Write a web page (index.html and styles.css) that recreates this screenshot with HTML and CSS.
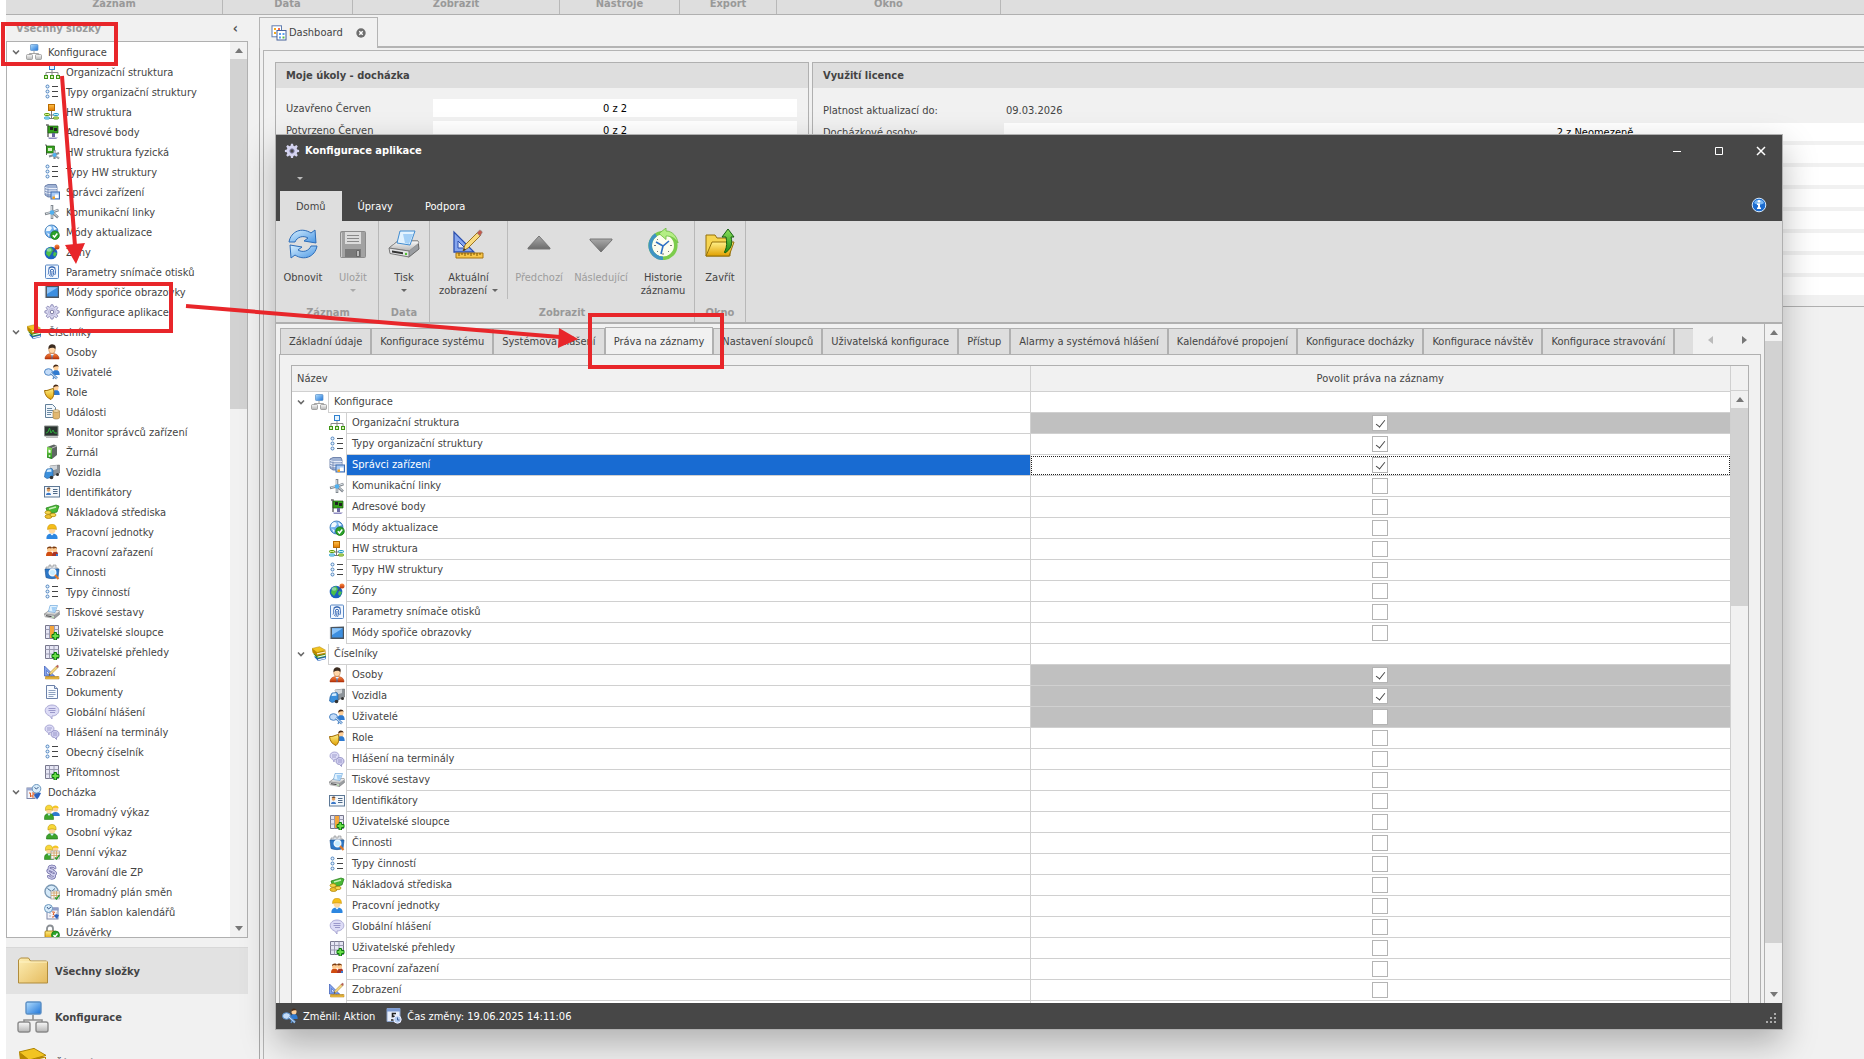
FILE: index.html
```html
<!DOCTYPE html>
<html lang="cs">
<head>
    <meta charset="utf-8">
    <title>Konfigurace aplikace</title>
    <link rel="stylesheet" href="styles.css">
</head>
<body>

<!-- icon sprite -->
<svg class="sprite" aria-hidden="true">
    <defs>
        <linearGradient id="blue" x1="0" y1="0" x2="1" y2="1"><stop offset="0" stop-color="#b5e0ff"/><stop offset="1" stop-color="#1e74d8"/></linearGradient>
        <linearGradient id="sky" x1="0" y1="0" x2="1" y2="1"><stop offset="0" stop-color="#d8f0ff"/><stop offset="1" stop-color="#4a96e4"/></linearGradient>
        <linearGradient id="gold" x1="0" y1="0" x2="0" y2="1"><stop offset="0" stop-color="#fff08a"/><stop offset="1" stop-color="#e0a000"/></linearGradient>
        <linearGradient id="green" x1="0" y1="0" x2="0" y2="1"><stop offset="0" stop-color="#8be05a"/><stop offset="1" stop-color="#1d8a16"/></linearGradient>
        <linearGradient id="orange" x1="0" y1="0" x2="0" y2="1"><stop offset="0" stop-color="#ffc24a"/><stop offset="1" stop-color="#e07800"/></linearGradient>
        <linearGradient id="red" x1="0" y1="0" x2="0" y2="1"><stop offset="0" stop-color="#ff8a40"/><stop offset="1" stop-color="#b83208"/></linearGradient>
        <linearGradient id="silver" x1="0" y1="0" x2="0" y2="1"><stop offset="0" stop-color="#fafafa"/><stop offset="1" stop-color="#b4b4b4"/></linearGradient>
        <linearGradient id="steel" x1="0" y1="0" x2="0" y2="1"><stop offset="0" stop-color="#a8a8a8"/><stop offset="1" stop-color="#6c6c6c"/></linearGradient>
        <linearGradient id="folder" x1="0" y1="0" x2="1" y2="1"><stop offset="0" stop-color="#fdeeb4"/><stop offset="1" stop-color="#e5bb5e"/></linearGradient>
    </defs>

    <symbol id="i-net" viewBox="0 0 16 16">
        <path d="M8 7v2.500M3.500 11V9.500h9V11" fill="none" stroke="#8f8f8f" stroke-width=".8"/>
        <rect x="4.500" y=".5" width="7.500" height="6" rx=".8" fill="url(#blue)" stroke="#5a8ec4" stroke-width=".7"/>
        <rect x=".5" y="10.500" width="6" height="5" rx="1" fill="url(#silver)" stroke="#8a8a8a" stroke-width=".7"/>
        <rect x="9.500" y="10.500" width="6" height="5" rx="1" fill="url(#silver)" stroke="#8a8a8a" stroke-width=".7"/>
    </symbol>
    <symbol id="i-org" viewBox="0 0 16 16">
        <path d="M8 6v6M2 12V8.500h12V12" fill="none" stroke="#8a8a8a"/>
        <rect x="5.500" y=".5" width="5" height="5" fill="#e4f3ff" stroke="#2f80cf"/>
        <g fill="#d8f5b8" stroke="#3f9416"><rect x=".5" y="11.500" width="3" height="3"/><rect x="6.500" y="11.500" width="3" height="3"/><rect x="12.500" y="11.500" width="3" height="3"/></g>
    </symbol>
    <symbol id="i-list" viewBox="0 0 16 16">
        <g fill="#eaf4fd" stroke="#4d83c0"><circle cx="3.500" cy="2.500" r="1.500"/><circle cx="3.500" cy="7.500" r="1.500"/><circle cx="3.500" cy="12.500" r="1.500"/></g>
        <path d="M8 2.500h6M8 7.500h6M8 12.500h6" stroke="#444"/>
    </symbol>
    <symbol id="i-hw" viewBox="0 0 16 16">
        <path d="M7.500 7v8M5 11h6M5 14.500h6" stroke="#777" fill="none"/>
        <rect x="4.500" y=".5" width="6" height="6" fill="url(#orange)" stroke="#b86a00"/>
        <g fill="#d8f08a" stroke="#5f9a10"><rect x=".5" y="9.500" width="5" height="2" rx="1"/><rect x="9.500" y="13" width="5" height="2" rx="1"/></g>
        <g fill="#c0f0ff" stroke="#2a9cc8"><rect x="9.500" y="9.500" width="5" height="2" rx="1"/><rect x=".5" y="13" width="5" height="2" rx="1"/></g>
    </symbol>
    <symbol id="i-board" viewBox="0 0 16 16">
        <path d="M2 1h2v12" stroke="#6b6b6b" stroke-width="1.500" fill="none"/>
        <path d="M4 2h10v7H4z" fill="#35a01e" stroke="#1d5c10" stroke-width=".7"/>
        <path d="M6 3h3v3H6zM10 4h3v3h-3z" fill="#222"/>
        <path d="M8 9h3v4H8z" fill="#6a68a0"/><path d="M4 13.500h10l-2 1.500H5z" fill="#8f8cc0"/>
    </symbol>
    <symbol id="i-hub" viewBox="0 0 16 16">
        <path d="M1 10l6-1.500M8 1v7M9 9l5 4.500M8 9v6M9 8l5.500-2" stroke="#80878e" stroke-width="2.600"/>
        <path d="M2 9.500l5-1.200M7.700 2v6M9 8.700l4.500 4M8 10v4M10 7.300l4-1.300" stroke="#dfe5ea"/>
        <circle cx="8" cy="8.500" r="2.200" fill="#4fb0f0"/>
    </symbol>
    <symbol id="i-hwfyz" viewBox="0 0 16 16">
        <path d="M1 1h1.500v10" stroke="#6b6b6b" fill="none"/>
        <path d="M2.500 2h8v7h-8z" fill="#35a01e" stroke="#1d5c10" stroke-width=".7"/><path d="M4 4h4v3H4z" fill="#d8f0c8"/>
        <path d="M5 12.500l5-1.500M10.500 6v9M10 10.500l5 4M11 10.500l4-1.500" stroke="#848b92" stroke-width="2.200"/>
        <path d="M10.300 7v4M11 10.800l3.500 2.700" stroke="#dfe5ea" stroke-width=".8"/>
        <circle cx="10.500" cy="11" r="2" fill="#4fb0f0"/>
    </symbol>
    <symbol id="i-server" viewBox="0 0 16 16">
        <path d="M1 2l3-1.500h8L13 3v9l-1 1H4l-3-2z" fill="#9fb2d4" stroke="#5a719e" stroke-width=".8"/>
        <path d="M1 3.500l3 1h9M1 6l3 1h9M1 8.500l3 1h3" fill="none" stroke="#e8eefa"/><path d="M4 4.500v8" stroke="#5a719e" stroke-width=".6"/>
        <rect x="7" y="8" width="8.500" height="7" fill="#a9cbf5" stroke="#3f6cb0"/>
        <path d="M8.500 12.500h2.500V15H8.500z" fill="#f0a020"/><path d="M11 10.500h3.500V14H11z" fill="#fff"/>
    </symbol>
    <symbol id="i-globe-ok" viewBox="0 0 16 16">
        <circle cx="7.500" cy="7.500" r="6.500" fill="url(#blue)" stroke="#2f6fb0" stroke-width=".8"/>
        <path d="M3 3l3-1 2 2-2 3-4 0zM9 2l4 3-3 1zM3 9l2.500 1L5 13z" fill="#f2faff"/>
        <circle cx="11" cy="11.200" r="4.300" fill="#2aa32a" stroke="#12700f" stroke-width=".7"/>
        <path d="M8.800 11.200l1.700 1.800 2.800-3.400" fill="none" stroke="#fff" stroke-width="1.500"/>
    </symbol>
    <symbol id="i-zone" viewBox="0 0 16 16">
        <circle cx="7" cy="9" r="6.300" fill="#1c62c0"/>
        <path d="M3 5l4-2 2 3-2 4-2 3-3-3zM10 8l3 1-2 4-2-2z" fill="#4cc04a"/>
        <ellipse cx="5" cy="6" rx="2.500" ry="1.800" fill="#cfeaff" opacity=".5"/>
        <path d="M9 8l3-4" stroke="#555"/><circle cx="13" cy="3" r="2.500" fill="url(#red)"/>
    </symbol>
    <symbol id="i-finger" viewBox="0 0 16 16">
        <rect x="1.500" y="1" width="13" height="13.500" rx="1" fill="#f1f7ff" stroke="#5a88c4"/>
        <g fill="none" stroke="#2a5fae" stroke-width=".9"><path d="M4 10.500c.8-1 .5-3 .5-4a3.500 3.500 0 0 1 7 0c0 2 0 3-.8 4.500M5.500 12c1.200-1.500.8-3.500.8-5a1.700 1.700 0 0 1 3.400 0c0 2.500-.4 4-1.200 5.800M8 7c0 2.500-.2 4-1.200 5.800M4.500 4C6 2.300 10 2.300 11.500 4"/></g>
    </symbol>
    <symbol id="i-screen" viewBox="0 0 16 16">
        <path d="M1 2l14-.5V14H1z" fill="#4a545e"/><path d="M3 3.200h10.800V12.500H3z" fill="#3d8fe0"/><path d="M3 3.200h10.800L3 10z" fill="#8cc4f8"/><path d="M1.500 2v12" stroke="#9aa4ae" stroke-width="1.200"/>
    </symbol>
    <symbol id="i-gear" viewBox="0 0 16 16">
        <path d="M7 .8h2l.4 1.900 1.300.5 1.600-1.100 1.500 1.500-1.100 1.600.5 1.300 1.900.4v2l-1.900.4-.5 1.300 1.100 1.600-1.500 1.500-1.600-1.100-1.300.5-.4 1.900H7l-.4-1.900-1.300-.5-1.600 1.100-1.500-1.500 1.100-1.600-.5-1.300L.9 8.900v-2l1.900-.4.5-1.300-1.100-1.600 1.500-1.500 1.600 1.100 1.300-.5z" fill="#d9d9f0" stroke="#8a88b4" stroke-width=".9"/>
        <circle cx="8" cy="8" r="3.500" fill="none" stroke="#b2b0d6" stroke-width=".8"/>
        <circle cx="8" cy="8" r="1.800" fill="#fff" stroke="#77759e"/>
    </symbol>
    <symbol id="i-gear-dark" viewBox="0 0 16 16">
        <path d="M7 .8h2l.4 1.900 1.300.5 1.600-1.100 1.500 1.500-1.100 1.600.5 1.300 1.900.4v2l-1.900.4-.5 1.300 1.100 1.600-1.500 1.500-1.600-1.100-1.300.5-.4 1.900H7l-.4-1.900-1.300-.5-1.600 1.100-1.500-1.500 1.100-1.600-.5-1.300L.9 8.900v-2l1.900-.4.5-1.300-1.100-1.600 1.500-1.500 1.600 1.100 1.300-.5z" fill="#d4d3f0"/>
        <circle cx="8" cy="8" r="2.200" fill="#474747" stroke="#8a88b4"/>
    </symbol>
    <symbol id="i-books" viewBox="0 0 16 16">
        <path d="M3 10.500l4 4.500 8-2v-3z" fill="#1f5fbe"/><path d="M7 13.200l7.500-1.700v1.200L7 14.400z" fill="#f0f4f8"/>
        <path d="M2 7.500l4.500 5 8-2V7.500z" fill="#2d8a22"/><path d="M6.500 10.500l7.500-1.700v1.200l-7.500 1.700z" fill="#eef6ea"/>
        <path d="M1 3l.5 3.500L6 10l8.500-2V5z" fill="#b98700"/><path d="M6 7.200l8-1.800v1.300l-8 1.800z" fill="#fff6d8"/>
        <path d="M1 2.500L8.500.7l6 3.500L6 6.500z" fill="#f2c422" stroke="#b08400" stroke-width=".5"/>
    </symbol>
    <symbol id="i-person" viewBox="0 0 16 16">
        <path d="M1 15c0-4 3-5.500 7-5.500S15 11 15 15z" fill="url(#red)" stroke="#a02c08" stroke-width=".5"/>
        <path d="M6.500 10l1.500 3 2-3z" fill="#eef4ff"/><path d="M8 11v4" stroke="#3a70b8"/>
        <ellipse cx="8" cy="5.500" rx="3.300" ry="4" fill="#ffd6a8" stroke="#a8713c" stroke-width=".5"/>
        <path d="M4.500 5C4 1 7-.2 9 .4c3 .1 3 3 2.300 4.600C10 3.500 7 3.200 4.500 5z" fill="#3c2c20"/>
    </symbol>
    <symbol id="i-mini-man" viewBox="0 0 8 12">
        <path d="M0 12c0-4 1.500-5.500 4-5.500S8 8 8 12z" fill="#2f7ad0"/>
        <circle cx="4" cy="4" r="2.800" fill="#ffcf98"/><path d="M1 4C.5 0 6-.5 7 3 5 2 3 2.500 1 4z" fill="#4a2c18"/>
    </symbol>
    <symbol id="i-user-key" viewBox="0 0 16 16">
        <use href="#i-mini-man" x="8" y="0" width="8" height="11"/>
        <ellipse cx="4.500" cy="8" rx="4" ry="3.300" fill="#c4dcf8" stroke="#4f86c4"/>
        <path d="M7 9l6 5.500" stroke="#5c8ec8" stroke-width="2.600"/><path d="M7 9l6 5.500" stroke="#cfe4fb"/>
        <path d="M10 13l-1 2" stroke="#5c8ec8" stroke-width="1.500"/>
    </symbol>
    <symbol id="i-role" viewBox="0 0 16 16">
        <use href="#i-mini-man" x="8" y="0" width="8" height="11"/>
        <path d="M.5 6.500C4 7 6 5 9.500 4.500c.5 4 1 8-2.500 11C3 14 1 11 .5 6.500z" fill="url(#gold)" stroke="#a06a00"/>
    </symbol>
    <symbol id="i-doc" viewBox="0 0 16 16">
        <path d="M2.500 1.500h8l3 3v10h-11z" fill="#f8fbff" stroke="#6b80a8"/><path d="M10.500 1.500v3h3" fill="#d6e2f4" stroke="#6b80a8"/>
        <path d="M4.500 6.500h7M4.500 8.500h7M4.500 10.500h7M4.500 12.500h5" stroke="#8fa2c0"/>
    </symbol>
    <symbol id="i-events" viewBox="0 0 16 16">
        <path d="M1.500.5h7l3 3v10h-10z" fill="#f2f7fc" stroke="#62809a"/><path d="M3 4.500h5M3 6.500h6M3 8.500h5M3 10.500h4" stroke="#6b8aa4"/>
        <path d="M9 7v6.500c0 2 6.500 2 6.500 0V7z" fill="#e2b870" stroke="#a07a3a" stroke-width=".6"/><ellipse cx="12.200" cy="7" rx="3.200" ry="1.300" fill="#f8e0b0" stroke="#a07a3a" stroke-width=".6"/>
    </symbol>
    <symbol id="i-monitor" viewBox="0 0 16 16">
        <path d="M.5 2h13.500v10H.5z" fill="#2b3430" stroke="#8a8f8c"/><path d="M2 9l2-1 1.500-4L7 9l2-3 1.500 3H13" fill="none" stroke="#2fae3c"/>
        <path d="M2 13.500h12" stroke="#bbb"/>
    </symbol>
    <symbol id="i-binder" viewBox="0 0 16 16">
        <path d="M3 3l7-2.500L13 2v9l-5 4-5-1.500z" fill="#5e6663"/><path d="M3 3l5 1v11l-5-1.500z" fill="url(#green)"/><path d="M4.500 5.500l2 .4v3l-2-.4z" fill="#fff"/><circle cx="5.500" cy="12" r="1" fill="#dff5d8"/><path d="M8 4l5-2" stroke="#bbb"/>
    </symbol>
    <symbol id="i-truck" viewBox="0 0 16 16">
        <path d="M6 2l9.500-1v8L9 12z" fill="#8d9399" stroke="#555" stroke-width=".5"/><path d="M6 2l7-.7V5L7 7z" fill="#d2d6da"/>
        <path d="M1 9l2-4 5-.5 1 2V13l-6 1.500L.5 13z" fill="#3c90dc" stroke="#1d5a9c" stroke-width=".6"/>
        <path d="M2.500 8l1-2.500 3.700-.3.300 2.500z" fill="#d8eeff"/><circle cx="7.500" cy="13.500" r="1.800" fill="#333"/><circle cx="13.500" cy="10.500" r="1.500" fill="#333"/>
    </symbol>
    <symbol id="i-card" viewBox="0 0 16 16">
        <rect x=".5" y="2.500" width="15" height="10.500" fill="#f4f8fc" stroke="#5d7896"/><path d="M9 5.500h4.500M9 7.500h4.500M9 9.500h4.500" stroke="#506a88"/>
        <circle cx="4.500" cy="6" r="1.800" fill="#e0a060"/><path d="M2.500 4.800c1-1.600 3.500-1.600 4 0z" fill="#4a2c18"/><path d="M2 11c0-3 5-3 5 0z" fill="#3a78c8"/>
    </symbol>
    <symbol id="i-money" viewBox="0 0 16 16">
        <path d="M2 4l10-3 3 1-2 6-9 2z" fill="#49b836" stroke="#1f7a14" stroke-width=".7"/><path d="M5 5l7-2" stroke="#c8f0b8" stroke-width="1.500"/>
        <ellipse cx="4" cy="8.500" rx="3" ry="1.800" fill="#f8d850" stroke="#a88000" stroke-width=".7"/>
        <ellipse cx="4.500" cy="12.500" rx="3.500" ry="2" fill="#f0c030" stroke="#a88000" stroke-width=".7"/><ellipse cx="9" cy="11" rx="3" ry="1.700" fill="#f8d850" stroke="#a88000" stroke-width=".7"/>
    </symbol>
    <symbol id="i-worker" viewBox="0 0 16 16">
        <path d="M2.500 15C2 11 4.500 9.500 8 9.500s6 1.500 5.500 5.500z" fill="#2c86e0"/><path d="M6 9.500l2 2 2-2z" fill="#fff"/>
        <circle cx="8" cy="6" r="3.400" fill="#ffd9a0"/><path d="M3.500 5.500C3.500 1 6 .3 8 .3s4.500.7 4.500 5.200C10 4.500 6 4.500 3.500 5.500z" fill="#f5bd18" stroke="#c08a00" stroke-width=".5"/>
    </symbol>
    <symbol id="i-worker-g" viewBox="0 0 16 16">
        <path d="M2.500 15C2 11 4.500 9.500 8 9.500s6 1.500 5.500 5.500z" fill="#3da42c" stroke="#176a10" stroke-width=".6"/><path d="M6 9.500l2 2.500 2-2.500z" fill="#cdeeff"/>
        <circle cx="8" cy="6.300" r="3.200" fill="#ffd9a0"/><path d="M4 6C3.500 1.500 6 .5 8 .5s4.500 1 4 5.500C10 4.500 6 4.500 4 6z" fill="#f8d838" stroke="#b89000" stroke-width=".6"/>
    </symbol>
    <symbol id="i-team" viewBox="0 0 16 16">
        <path d="M2 12c0-3 1-4.500 3.500-4.500S9 9 9 12z" fill="#d04c10"/><path d="M8 12c0-3 1-4.500 3.500-4.500S14 9 14 12z" fill="#a83428"/><path d="M12 10h2v2h-2z" fill="#3a78d0"/>
        <circle cx="5.500" cy="5.500" r="2.500" fill="#ffcb90"/><circle cx="10.500" cy="5.500" r="2.500" fill="#ffcb90"/>
        <path d="M3 5C3 2 7.500 2 8 4 8.500 2 13 2 13 5l-1-1-2.500.5L8 4l-1 .5L5 4z" fill="#7c3c10"/>
    </symbol>
    <symbol id="i-tasks" viewBox="0 0 16 16">
        <path d="M2 3h3V1h2v2h2V1h3v3h2v4H2z" fill="#dfe3e8" stroke="#888" stroke-width=".6"/>
        <path d="M1 5h14l-1 8.500c-3 1.500-9 1.500-12 0z" fill="#2c78c8" stroke="#164c8c" stroke-width=".6"/>
        <circle cx="8.500" cy="8.500" r="3.300" fill="#c8ecff" stroke="#eef6fc" stroke-width="1.400"/><path d="M11 11l3.500 4" stroke="#e07828" stroke-width="2"/>
    </symbol>
    <symbol id="i-printer" viewBox="0 0 32 32">
        <path d="M1 20l9-7h20l1 8-10 8z" fill="#9a9da1" stroke="#666"/>
        <path d="M1 20l9-7h20l1 2-10 8z" fill="url(#silver)" stroke="#888" stroke-width=".7"/>
        <path d="M12 3h15l-5 14-13-2z" fill="#e2f2fe" stroke="#3f8bd0"/><path d="M15 6h10l-4 10-4-1z" fill="#a4d0f6"/>
        <path d="M1 20l20 3v6L2 25.500z" fill="#e2e3e5" stroke="#777"/><path d="M4 22.500l11 1.700v2L4 24.500z" fill="#333"/><circle cx="18" cy="26" r="1.200" fill="#4fbf30"/>
    </symbol>
    <symbol id="i-grid-add" viewBox="0 0 16 16">
        <path d="M1.500 1.500h13v13h-13z" fill="#e6e6f4" stroke="#77778c"/><path d="M5.500 1.500v13M10 1.500v13M1.500 5.500h13M1.500 10h13" stroke="#9a9ab0"/>
        <path d="M10 8.500h2.500v2H15v3h-2.500V16H10v-2.500H8v-3h2z" fill="#6adf4a" stroke="#0c7a0c"/>
    </symbol>
    <symbol id="i-cols-add" viewBox="0 0 16 16">
        <path d="M1.500 1.500h13v13h-13z" fill="#e6e6f4" stroke="#77778c"/><path d="M6 2h4v12H6z" fill="#f5a63c"/><path d="M5.500 1.500v13M10.500 1.500v13M1.500 5.500h4M10.500 5.500h4M1.500 10h4" stroke="#9a9ab0"/>
        <path d="M10 8.500h2.500v2H15v3h-2.500V16H10v-2.500H8v-3h2z" fill="#6adf4a" stroke="#0c7a0c"/>
    </symbol>
    <symbol id="i-view" viewBox="0 0 32 32">
        <path d="M1 4v20h20z" fill="#86a6ee" stroke="#2c4fae" stroke-width="1.300"/><path d="M5 13v7h7z" fill="#dfe8fb" stroke="#2c4fae"/>
        <path d="M3 25h27v5H3z" fill="#f8c648" stroke="#a87410"/><path d="M6 25v3M9 25v2M12 25v3M15 25v2M18 25v3M21 25v2M24 25v3M27 25v2" stroke="#7c5400"/>
        <path d="M10 23l2-6L25 4l3 3-13 13z" fill="#f8da80" stroke="#9c7420"/><path d="M24 5l2-2.500c1-1 4 1 3 2.500L27 8z" fill="#c45a4c" stroke="#8c8c8c" stroke-width=".6"/><path d="M10 23l1-3 2 2z" fill="#333"/>
    </symbol>
    <symbol id="i-bubble" viewBox="0 0 16 16">
        <path d="M8 1c4 0 6.800 2.500 6.800 5.500S12 12 8 12v3L5.500 11.800C3 11 1.200 9.200 1.200 6.500 1.200 3.500 4 1 8 1z" fill="#dddcf6" stroke="#9a98ca" stroke-width=".8"/><path d="M4.500 4.500h7M4.500 6.500h7M6 8.500h5" stroke="#9a98ca"/>
    </symbol>
    <symbol id="i-bubbles" viewBox="0 0 16 16">
        <path d="M5.500 1C8.500 1 10 3 10 5S8 8.500 5.500 8.500L5 11 4 8.300C2 7.800 1 6.500 1 5c0-2.500 2-4 4.500-4z" fill="#dddcf6" stroke="#9a98ca" stroke-width=".8"/>
        <path d="M11 6.500c2.500 0 4 1.500 4 3.500s-1 3-2.500 3.400L12.500 15.500l-2-2C8 13.400 7 12 7 10s1.500-3.500 4-3.500z" fill="#cfceee" stroke="#8a88be" stroke-width=".8"/><path d="M3 4h5M3 6h4M9 9h4M9 11h4" stroke="#9391c4" stroke-width=".8"/>
    </symbol>
    <symbol id="i-attend" viewBox="0 0 16 16">
        <rect x="1" y="4" width="8" height="10.500" fill="#f2f4fa" stroke="#7c86a8"/><path d="M1 4h8v2.500H1z" fill="#9aa8d0"/><path d="M3 9h1.500v4M6 9h2v2H6v2h2" fill="none" stroke="#e05c20"/>
        <path d="M8 11l3-3 4 1-2 4-2 2.500z" fill="#2c62c0"/>
        <circle cx="10.500" cy="4.800" r="4.300" fill="#d8ecfa" stroke="#6a96be"/><path d="M8.500 3.500l2 1.500 2-2" fill="none" stroke="#3a5a8a"/>
    </symbol>
    <symbol id="i-crowd" viewBox="0 0 16 16">
        <path d="M7.500 12c0-3 1.500-4 4-4s4.300 1 4.300 4z" fill="#2f7ad0"/><circle cx="11.500" cy="5" r="2.600" fill="#ffcf98"/><path d="M8.300 4.500C8 .5 15 .5 14.700 4.500 13 3.600 10 3.600 8.300 4.500z" fill="#f5c520"/>
        <path d="M.5 15.500C0 11 2 9.500 5 9.500s5 1.500 4.500 6z" fill="#3da42c" stroke="#176a10" stroke-width=".5"/><circle cx="5" cy="6.800" r="2.800" fill="#ffd9a0"/><path d="M1.500 6.500C1 2 3 1.200 5 1.200S9 2 8.500 6.500C7 5.200 3 5.200 1.500 6.500z" fill="#f8d838" stroke="#b89000" stroke-width=".5"/><path d="M3.500 9.800L5 12l1.500-2.200z" fill="#cdeeff"/>
    </symbol>
    <symbol id="i-sheet" viewBox="0 0 16 16">
        <rect x="7" y="7" width="8.500" height="8" fill="#f6f6f6" stroke="#999" stroke-width=".7"/><path d="M7 9h8.500M10 7v8M12.500 7v8M7 11.500h8.500" stroke="#d0a060" stroke-width=".8"/><path d="M11 13.500l1.500 1.500 3-4" fill="none" stroke="#2a9a2a" stroke-width="1.400"/>
    </symbol>
    <symbol id="i-daily" viewBox="0 0 16 16"><use href="#i-crowd" width="16" height="16"/><use href="#i-sheet" width="16" height="16"/></symbol>
    <symbol id="i-para" viewBox="0 0 16 16">
        <g fill="none" stroke-linecap="round"><path id="para" d="M11 4C10.500 1.500 5 1.300 5 4.200c0 2.600 6.500 2.300 6.500 5 0 1.500-2.500 2.300-4 1.500M8.500 6C5.500 4.800 3.500 6 4 7.500c.7 2 6.800 2.200 6.500 4.800-.3 2.500-5.500 2.300-6 0" stroke="#7a78ae" stroke-width="2.600"/><use href="#para"/><path d="M11 4C10.500 1.500 5 1.300 5 4.200c0 2.600 6.500 2.300 6.500 5 0 1.500-2.500 2.300-4 1.500M8.500 6C5.500 4.800 3.500 6 4 7.500c.7 2 6.800 2.200 6.500 4.800-.3 2.500-5.500 2.300-6 0" stroke="#d4d3f0" stroke-width="1.200"/></g>
    </symbol>
    <symbol id="i-plan" viewBox="0 0 16 16">
        <circle cx="7.500" cy="7.500" r="6.500" fill="#d5e9f8" stroke="#7a98b4" stroke-width="1.400"/><path d="M3.500 4.500l4 3 3.500-3" fill="none" stroke="#456a90"/><use href="#i-sheet" width="16" height="16"/>
    </symbol>
    <symbol id="i-plancal" viewBox="0 0 16 16">
        <rect x="3" y="4" width="11" height="11" fill="#f4f4fa" stroke="#7c86a8"/><path d="M3 3.500h11.500v3H3z" fill="#8f9dc8"/><path d="M5 9h2M5 12h2M12 9h1" stroke="#aab"/><path d="M8 8h2.500L9 10.500c3 0 1.500 3-1 2.500" fill="none" stroke="#e05c20"/>
        <circle cx="4.500" cy="4.500" r="4" fill="#d8ecfa" stroke="#6a96be"/><path d="M3 3l1.500 2L7 3" fill="none" stroke="#3a5a8a"/><path d="M10 12l2-2 3 1-2 4z" fill="#2c62c0"/>
    </symbol>
    <symbol id="i-lock" viewBox="0 0 16 16">
        <path d="M3 8V4.500a3 3 0 0 1 6 0V8" fill="none" stroke="#8a8f94" stroke-width="1.800"/><rect x="1" y="7" width="10" height="7.500" rx="1" fill="url(#gold)" stroke="#a07400" stroke-width=".8"/>
        <circle cx="11.500" cy="11" r="4" fill="#2aa32a" stroke="#12700f" stroke-width=".7"/><path d="M9.500 11l1.500 1.800 2.500-3.300" fill="none" stroke="#fff" stroke-width="1.400"/>
    </symbol>
    <symbol id="i-time" viewBox="0 0 16 16">
        <path d="M1 .5h13v13H1z" fill="#e8eefa" stroke="#8ba3cc"/><path d="M1 .5h13v3H1z" fill="#7c9bd4"/><path d="M10 5.500H6.500V8.500c4-1 4 3.500 0 3.500H5" fill="none" stroke="#222" stroke-width="1.600"/>
        <circle cx="11.500" cy="11.500" r="3.700" fill="#b4cdf0" stroke="#eef"/><path d="M11.500 9.500v2.500h2" fill="none" stroke="#3a5a9a"/>
    </symbol>
    <symbol id="i-info" viewBox="0 0 16 16">
        <circle cx="8" cy="8" r="6.800" fill="#1c6cd0" stroke="#d8ecff"/><path d="M3 6C4 1.500 12 1.500 13 6 10 8 6 8 3 6z" fill="#7ab8f4"/>
        <circle cx="8" cy="4.300" r="1.300" fill="#fff"/><path d="M6 6.500h3v4h1v1.500H6v-1.500h1V8H6z" fill="#fff"/>
    </symbol>
    <symbol id="i-dash" viewBox="0 0 16 16">
        <rect x="1" y=".8" width="9.500" height="11" fill="#fff" stroke="#5f7cb0"/><path d="M3 3h2v2H3zM3 7h2v2H3z" fill="#f5a81c"/><path d="M7 3h2v2H7z" fill="#f06c50"/>
        <rect x="6" y="5.500" width="9" height="9.500" fill="#fff" stroke="#45619a"/><path d="M8 8h2v2H8zM11.500 8h2v2h-2z" fill="#5ba0f0"/><path d="M8 11.500h2v2H8z" fill="#5ba0f0"/><path d="M11.500 11.500h2v2h-2z" fill="#5cb848"/>
    </symbol>
    <symbol id="i-close" viewBox="0 0 10 10"><circle cx="5" cy="5" r="4.700" fill="#6e6e6e"/><path d="M3.300 3.300l3.400 3.400M6.700 3.300L3.300 6.700" stroke="#fff" stroke-width="1.400"/></symbol>
    <symbol id="i-chev" viewBox="0 0 8 8"><path d="M1 2.500l3 3 3-3" fill="none" stroke="#6a6a6a" stroke-width="1.600"/></symbol>

    <symbol id="i-refresh" viewBox="0 0 32 32">
        <path d="M2 14C4 3 15-1 24 5l4-3 1 13-12-2 4-3c-5-3-11-1-13 4z" fill="url(#sky)" stroke="#2c6cb8"/>
        <path d="M30 18c-2 11-13 15-22 9l-4 3L3 17l12 2-4 3c5 3 11 1 13-4z" fill="url(#sky)" stroke="#2c6cb8"/>
    </symbol>
    <symbol id="i-save" viewBox="0 0 32 32">
        <rect x="3.500" y="3.500" width="25" height="26" rx="1" fill="#a2a2a2" stroke="#8c8c8c"/><path d="M8 4h16v12H8z" fill="#dcdcdc"/><path d="M10 7.500h12M10 10.500h12M10 13.500h12" stroke="#8a8a8a"/><path d="M8 21h16v8H8z" fill="#7a7a7a"/><path d="M19.500 22.500h3v6h-3z" fill="#bcbcbc" stroke="#666"/><path d="M4.500 5v24" stroke="#ccc"/>
    </symbol>
    <symbol id="i-up" viewBox="0 0 32 32"><path d="M16 8l11 12v1H5v-1z" fill="url(#steel)" stroke="#777"/></symbol>
    <symbol id="i-down" viewBox="0 0 32 32"><path d="M16 24L5 12v-1h22v1z" fill="url(#steel)" stroke="#777"/></symbol>
    <symbol id="i-history" viewBox="0 0 32 32">
        <circle cx="16" cy="17.500" r="12.800" fill="#fdfdee" stroke="#7ccc4c" stroke-width="3.600"/>
        <path d="M16 30.300A12.800 12.800 0 0 1 9 6.800" fill="none" stroke="#3f93c4" stroke-width="3.600"/>
        <path d="M12 5.500L19 0v3c6 0 11 5 12 12-3-5-7-7-12-7v3.500z" fill="#b4ee84" stroke="#6cba40" stroke-width=".8"/>
        <path d="M9 14l7 4 6-5M16 18l-2 8" fill="none" stroke="#2d70c4" stroke-width="1.600"/><path d="M25 17.500h-2M7 17.500h2M16 27v-2M22 24l-1-1M10 24l1-1M10 11l1 1" stroke="#777"/>
    </symbol>
    <symbol id="i-exit" viewBox="0 0 32 32">
        <path d="M2 28V7h9l2 3h13v18z" fill="#f6d552" stroke="#94700a"/><path d="M2 28l6-14h22l-5 14z" fill="url(#gold)" stroke="#94700a"/>
        <path d="M18 9l6-8 6 8h-3c2 7 0 12-6 16-1-1-1-1 0-2 2-4 2-9 1-14z" fill="url(#green)" stroke="#146010"/>
    </symbol>
    <symbol id="i-folder" viewBox="0 0 32 32"><path d="M1.500 28V5l2-2h8l2 3h16l1 1v21z" fill="url(#folder)" stroke="#b08c3c"/><path d="M2 7h28" stroke="#fff3c4"/></symbol>
</svg>

<div class="app">
    <div class="main-ribbon">
        <span>Záznam</span><span>Data</span><span>Zobrazit</span><span>Nástroje</span><span>Export</span><span>Okno</span>
    </div>

    <div class="workspace">
        <aside class="sidebar">
            <div class="sidebar-head">Všechny složky <button class="collapse" aria-label="Sbalit">‹</button></div>
            <div class="tree">
                <ul class="tree-list">
                    <li class="group"><svg class="chev"><use href="#i-chev"/></svg><svg class="icon"><use href="#i-net"/></svg><a href="#">Konfigurace</a></li>
                    <li><svg class="icon"><use href="#i-org"/></svg><a href="#">Organizační struktura</a></li>
                    <li><svg class="icon"><use href="#i-list"/></svg><a href="#">Typy organizační struktury</a></li>
                    <li><svg class="icon"><use href="#i-hw"/></svg><a href="#">HW struktura</a></li>
                    <li><svg class="icon"><use href="#i-board"/></svg><a href="#">Adresové body</a></li>
                    <li><svg class="icon"><use href="#i-hwfyz"/></svg><a href="#">HW struktura fyzická</a></li>
                    <li><svg class="icon"><use href="#i-list"/></svg><a href="#">Typy HW struktury</a></li>
                    <li><svg class="icon"><use href="#i-server"/></svg><a href="#">Správci zařízení</a></li>
                    <li><svg class="icon"><use href="#i-hub"/></svg><a href="#">Komunikační linky</a></li>
                    <li><svg class="icon"><use href="#i-globe-ok"/></svg><a href="#">Módy aktualizace</a></li>
                    <li><svg class="icon"><use href="#i-zone"/></svg><a href="#">Zóny</a></li>
                    <li><svg class="icon"><use href="#i-finger"/></svg><a href="#">Parametry snímače otisků</a></li>
                    <li><svg class="icon"><use href="#i-screen"/></svg><a href="#">Módy spořiče obrazovky</a></li>
                    <li><svg class="icon"><use href="#i-gear"/></svg><a href="#">Konfigurace aplikace</a></li>
                    <li class="group"><svg class="chev"><use href="#i-chev"/></svg><svg class="icon"><use href="#i-books"/></svg><a href="#">Číselníky</a></li>
                    <li><svg class="icon"><use href="#i-person"/></svg><a href="#">Osoby</a></li>
                    <li><svg class="icon"><use href="#i-user-key"/></svg><a href="#">Uživatelé</a></li>
                    <li><svg class="icon"><use href="#i-role"/></svg><a href="#">Role</a></li>
                    <li><svg class="icon"><use href="#i-events"/></svg><a href="#">Události</a></li>
                    <li><svg class="icon"><use href="#i-monitor"/></svg><a href="#">Monitor správců zařízení</a></li>
                    <li><svg class="icon"><use href="#i-binder"/></svg><a href="#">Žurnál</a></li>
                    <li><svg class="icon"><use href="#i-truck"/></svg><a href="#">Vozidla</a></li>
                    <li><svg class="icon"><use href="#i-card"/></svg><a href="#">Identifikátory</a></li>
                    <li><svg class="icon"><use href="#i-money"/></svg><a href="#">Nákladová střediska</a></li>
                    <li><svg class="icon"><use href="#i-worker"/></svg><a href="#">Pracovní jednotky</a></li>
                    <li><svg class="icon"><use href="#i-team"/></svg><a href="#">Pracovní zařazení</a></li>
                    <li><svg class="icon"><use href="#i-tasks"/></svg><a href="#">Činnosti</a></li>
                    <li><svg class="icon"><use href="#i-list"/></svg><a href="#">Typy činností</a></li>
                    <li><svg class="icon"><use href="#i-printer"/></svg><a href="#">Tiskové sestavy</a></li>
                    <li><svg class="icon"><use href="#i-cols-add"/></svg><a href="#">Uživatelské sloupce</a></li>
                    <li><svg class="icon"><use href="#i-grid-add"/></svg><a href="#">Uživatelské přehledy</a></li>
                    <li><svg class="icon"><use href="#i-view"/></svg><a href="#">Zobrazení</a></li>
                    <li><svg class="icon"><use href="#i-doc"/></svg><a href="#">Dokumenty</a></li>
                    <li><svg class="icon"><use href="#i-bubble"/></svg><a href="#">Globální hlášení</a></li>
                    <li><svg class="icon"><use href="#i-bubbles"/></svg><a href="#">Hlášení na terminály</a></li>
                    <li><svg class="icon"><use href="#i-list"/></svg><a href="#">Obecný číselník</a></li>
                    <li><svg class="icon"><use href="#i-grid-add"/></svg><a href="#">Přítomnost</a></li>
                    <li class="group"><svg class="chev"><use href="#i-chev"/></svg><svg class="icon"><use href="#i-attend"/></svg><a href="#">Docházka</a></li>
                    <li><svg class="icon"><use href="#i-crowd"/></svg><a href="#">Hromadný výkaz</a></li>
                    <li><svg class="icon"><use href="#i-worker-g"/></svg><a href="#">Osobní výkaz</a></li>
                    <li><svg class="icon"><use href="#i-daily"/></svg><a href="#">Denní výkaz</a></li>
                    <li><svg class="icon"><use href="#i-para"/></svg><a href="#">Varování dle ZP</a></li>
                    <li><svg class="icon"><use href="#i-plan"/></svg><a href="#">Hromadný plán směn</a></li>
                    <li><svg class="icon"><use href="#i-plancal"/></svg><a href="#">Plán šablon kalendářů</a></li>
                    <li><svg class="icon"><use href="#i-lock"/></svg><a href="#">Uzávěrky</a></li>
                </ul>
                <div class="scrollbar scroll-tree"><i class="arrow up"></i><i class="thumb"></i><i class="arrow down"></i></div>
            </div>
            <nav class="folders">
                <a class="folder active" href="#"><svg class="icon-lg"><use href="#i-folder"/></svg>Všechny složky</a>
                <a class="folder" href="#"><svg class="icon-lg"><use href="#i-net"/></svg>Konfigurace</a>
                <a class="folder" href="#"><svg class="icon-lg"><use href="#i-books"/></svg>Číselníky</a>
            </nav>
        </aside>

        <main class="main">
            <div class="doc-tabs">
                <div class="doc-tab"><svg class="icon"><use href="#i-dash"/></svg><a href="#">Dashboard</a><button class="tab-close" aria-label="Zavřít záložku"><svg><use href="#i-close"/></svg></button></div>
            </div>
            <div class="doc">
                <div class="dashboard">
                    <section class="panel">
                        <h2>Moje úkoly - docházka</h2>
                        <dl class="facts tasks">
                            <dt>Uzavřeno Červen</dt><dd class="bar">0 z 2</dd>
                            <dt>Potvrzeno Červen</dt><dd class="bar">0 z 2</dd>
                        </dl>
                    </section>
                    <section class="panel">
                        <h2>Využití licence</h2>
                        <dl class="facts licence">
                            <dt>Platnost aktualizací do:</dt><dd>09.03.2026</dd>
                            <dt>Docházkové osoby:</dt><dd class="bar">2 z Neomezeně</dd>
                            <dt></dt><dd class="bar"></dd>
                            <dt></dt><dd class="bar"></dd>
                            <dt></dt><dd class="bar"></dd>
                            <dt></dt><dd class="bar"></dd>
                            <dt></dt><dd class="bar"></dd>
                            <dt></dt><dd class="bar"></dd>
                            <dt></dt><dd class="bar"></dd>
                        </dl>
                    </section>
                </div>
            </div>
        </main>
    </div>
</div>

<div class="window">
    <header class="titlebar">
        <div class="title-row">
            <svg class="icon"><use href="#i-gear-dark"/></svg>
            <h1>Konfigurace aplikace</h1>
            <button class="win-btn" aria-label="Minimalizovat"><svg viewBox="0 0 10 10"><path d="M1 5.500h8" stroke="#fff"/></svg></button>
            <button class="win-btn" aria-label="Maximalizovat"><svg viewBox="0 0 10 10"><path d="M1.500 1.500h7v7h-7z" fill="none" stroke="#fff"/></svg></button>
            <button class="win-btn" aria-label="Zavřít okno"><svg viewBox="0 0 10 10"><path d="M1 1l8 8M9 1L1 9" stroke="#fff" stroke-width="1.500"/></svg></button>
        </div>
        <div class="quick-row"><i class="caret"></i></div>
        <div class="menu-row">
            <button class="menu-tab active">Domů</button>
            <button class="menu-tab">Úpravy</button>
            <button class="menu-tab">Podpora</button>
            <button class="info" aria-label="Informace"><svg class="icon"><use href="#i-info"/></svg></button>
        </div>
    </header>

    <div class="ribbon">
        <section class="ribbon-group">
            <div class="tools">
                <button class="tool"><svg class="icon-lg"><use href="#i-refresh"/></svg>Obnovit</button>
                <button class="tool" disabled><svg class="icon-lg"><use href="#i-save"/></svg>Uložit<i class="caret"></i></button>
            </div>
            <h3>Záznam</h3>
        </section>
        <section class="ribbon-group">
            <div class="tools">
                <button class="tool"><svg class="icon-lg"><use href="#i-printer"/></svg>Tisk<i class="caret"></i></button>
            </div>
            <h3>Data</h3>
        </section>
        <section class="ribbon-group">
            <div class="tools">
                <button class="tool tool-view"><svg class="icon-lg"><use href="#i-view"/></svg>Aktuální<span class="with-caret">zobrazení <i class="caret"></i></span></button>
                <button class="tool tool-wide" disabled><svg class="icon-lg"><use href="#i-up"/></svg>Předchozí</button>
                <button class="tool tool-wide" disabled><svg class="icon-lg"><use href="#i-down"/></svg>Následující</button>
                <button class="tool tool-wide"><svg class="icon-lg"><use href="#i-history"/></svg>Historie<span>záznamu</span></button>
            </div>
            <h3>Zobrazit</h3>
        </section>
        <section class="ribbon-group">
            <div class="tools">
                <button class="tool"><svg class="icon-lg"><use href="#i-exit"/></svg>Zavřít</button>
            </div>
            <h3>Okno</h3>
        </section>
    </div>

    <div class="window-body">
        <div class="page">
            <div class="tab-row">
                <div class="tabs">
                    <button class="tab">Základní údaje</button>
                    <button class="tab">Konfigurace systému</button>
                    <button class="tab">Systémová hlášení</button>
                    <button class="tab active">Práva na záznamy</button>
                    <button class="tab">Nastavení sloupců</button>
                    <button class="tab">Uživatelská konfigurace</button>
                    <button class="tab">Přístup</button>
                    <button class="tab">Alarmy a systémová hlášení</button>
                    <button class="tab">Kalendářové propojení</button>
                    <button class="tab">Konfigurace docházky</button>
                    <button class="tab">Konfigurace návštěv</button>
                    <button class="tab">Konfigurace stravování</button>
                    <button class="tab tab-more" aria-label="Další záložka"></button>
                </div>
                <button class="tab-nav" aria-label="Předchozí záložky" disabled><i class="arrow left"></i></button>
                <button class="tab-nav" aria-label="Další záložky"><i class="arrow right"></i></button>
            </div>
            <div class="tab-page">
                <div class="grid">
                    <table>
                        <thead>
                            <tr><th class="name">Název</th><th>Povolit práva na záznamy</th></tr>
                        </thead>
                        <tbody>
                            <tr class="group"><td><div class="node"><svg class="chev"><use href="#i-chev"/></svg><svg class="icon"><use href="#i-net"/></svg><span>Konfigurace</span></div></td><td></td></tr>
                            <tr class="locked"><td><div class="node"><svg class="icon"><use href="#i-org"/></svg><label for="r1">Organizační struktura</label></div></td><td><input type="checkbox" id="r1" checked></td></tr>
                            <tr><td><div class="node"><svg class="icon"><use href="#i-list"/></svg><label for="r2">Typy organizační struktury</label></div></td><td><input type="checkbox" id="r2" checked></td></tr>
                            <tr class="selected"><td><div class="node"><svg class="icon"><use href="#i-server"/></svg><label for="r3">Správci zařízení</label></div></td><td><input type="checkbox" id="r3" checked></td></tr>
                            <tr><td><div class="node"><svg class="icon"><use href="#i-hub"/></svg><label for="r4">Komunikační linky</label></div></td><td><input type="checkbox" id="r4"></td></tr>
                            <tr><td><div class="node"><svg class="icon"><use href="#i-board"/></svg><label for="r5">Adresové body</label></div></td><td><input type="checkbox" id="r5"></td></tr>
                            <tr><td><div class="node"><svg class="icon"><use href="#i-globe-ok"/></svg><label for="r6">Módy aktualizace</label></div></td><td><input type="checkbox" id="r6"></td></tr>
                            <tr><td><div class="node"><svg class="icon"><use href="#i-hw"/></svg><label for="r7">HW struktura</label></div></td><td><input type="checkbox" id="r7"></td></tr>
                            <tr><td><div class="node"><svg class="icon"><use href="#i-list"/></svg><label for="r8">Typy HW struktury</label></div></td><td><input type="checkbox" id="r8"></td></tr>
                            <tr><td><div class="node"><svg class="icon"><use href="#i-zone"/></svg><label for="r9">Zóny</label></div></td><td><input type="checkbox" id="r9"></td></tr>
                            <tr><td><div class="node"><svg class="icon"><use href="#i-finger"/></svg><label for="r10">Parametry snímače otisků</label></div></td><td><input type="checkbox" id="r10"></td></tr>
                            <tr><td><div class="node"><svg class="icon"><use href="#i-screen"/></svg><label for="r11">Módy spořiče obrazovky</label></div></td><td><input type="checkbox" id="r11"></td></tr>
                            <tr class="group"><td><div class="node"><svg class="chev"><use href="#i-chev"/></svg><svg class="icon"><use href="#i-books"/></svg><span>Číselníky</span></div></td><td></td></tr>
                            <tr class="locked"><td><div class="node"><svg class="icon"><use href="#i-person"/></svg><label for="r12">Osoby</label></div></td><td><input type="checkbox" id="r12" checked></td></tr>
                            <tr class="locked"><td><div class="node"><svg class="icon"><use href="#i-truck"/></svg><label for="r13">Vozidla</label></div></td><td><input type="checkbox" id="r13" checked></td></tr>
                            <tr class="locked"><td><div class="node"><svg class="icon"><use href="#i-user-key"/></svg><label for="r14">Uživatelé</label></div></td><td><input type="checkbox" id="r14"></td></tr>
                            <tr><td><div class="node"><svg class="icon"><use href="#i-role"/></svg><label for="r15">Role</label></div></td><td><input type="checkbox" id="r15"></td></tr>
                            <tr><td><div class="node"><svg class="icon"><use href="#i-bubbles"/></svg><label for="r16">Hlášení na terminály</label></div></td><td><input type="checkbox" id="r16"></td></tr>
                            <tr><td><div class="node"><svg class="icon"><use href="#i-printer"/></svg><label for="r17">Tiskové sestavy</label></div></td><td><input type="checkbox" id="r17"></td></tr>
                            <tr><td><div class="node"><svg class="icon"><use href="#i-card"/></svg><label for="r18">Identifikátory</label></div></td><td><input type="checkbox" id="r18"></td></tr>
                            <tr><td><div class="node"><svg class="icon"><use href="#i-cols-add"/></svg><label for="r19">Uživatelské sloupce</label></div></td><td><input type="checkbox" id="r19"></td></tr>
                            <tr><td><div class="node"><svg class="icon"><use href="#i-tasks"/></svg><label for="r20">Činnosti</label></div></td><td><input type="checkbox" id="r20"></td></tr>
                            <tr><td><div class="node"><svg class="icon"><use href="#i-list"/></svg><label for="r21">Typy činností</label></div></td><td><input type="checkbox" id="r21"></td></tr>
                            <tr><td><div class="node"><svg class="icon"><use href="#i-money"/></svg><label for="r22">Nákladová střediska</label></div></td><td><input type="checkbox" id="r22"></td></tr>
                            <tr><td><div class="node"><svg class="icon"><use href="#i-worker"/></svg><label for="r23">Pracovní jednotky</label></div></td><td><input type="checkbox" id="r23"></td></tr>
                            <tr><td><div class="node"><svg class="icon"><use href="#i-bubble"/></svg><label for="r24">Globální hlášení</label></div></td><td><input type="checkbox" id="r24"></td></tr>
                            <tr><td><div class="node"><svg class="icon"><use href="#i-grid-add"/></svg><label for="r25">Uživatelské přehledy</label></div></td><td><input type="checkbox" id="r25"></td></tr>
                            <tr><td><div class="node"><svg class="icon"><use href="#i-team"/></svg><label for="r26">Pracovní zařazení</label></div></td><td><input type="checkbox" id="r26"></td></tr>
                            <tr><td><div class="node"><svg class="icon"><use href="#i-view"/></svg><label for="r27">Zobrazení</label></div></td><td><input type="checkbox" id="r27"></td></tr>
                            <tr><td><div class="node"><svg class="icon"></svg><label for="r28"></label></div></td><td><input type="checkbox" id="r28"></td></tr>
                        </tbody>
                    </table>
                    <div class="grid-side">
                        <div class="grid-corner"></div>
                        <div class="scrollbar scroll-grid"><i class="arrow up"></i><i class="thumb"></i></div>
                    </div>
                </div>
            </div>
        </div>
        <div class="scrollbar scroll-page"><i class="arrow up"></i><i class="thumb"></i><i class="arrow down"></i></div>
    </div>

    <footer class="status">
        <svg class="icon"><use href="#i-user-key"/></svg><span>Změnil: Aktion</span>
        <svg class="icon"><use href="#i-time"/></svg><span>Čas změny: 19.06.2025 14:11:06</span>
        <svg class="grip" viewBox="0 0 12 12"><path d="M9 1h2v2H9zM5 5h2v2H5zM9 5h2v2H9zM1 9h2v2H1zM5 9h2v2H5zM9 9h2v2H9z" fill="#aaa"/></svg>
    </footer>
</div>

<!-- walkthrough marks -->
<svg class="marks" aria-hidden="true">
    <g fill="none" stroke="#e8262a" stroke-width="4">
        <rect x="3" y="24" width="113" height="40"/>
        <rect x="36" y="284" width="135" height="47"/>
        <rect x="590" y="315" width="132" height="52"/>
        <path d="M62 76l13 170M186 306l374 31"/>
    </g>
    <path d="M65 245l20-2-9 21zM559 328l-1 20 20-9z" fill="#e8262a"/>
</svg>

</body>
</html>
```

FILE: styles.css
```css
* {
    box-sizing: border-box;
}

body {
    margin: 0;
    height: 100vh;
    overflow: hidden;
    background: #fff;
    color: #444;
    font: 11px/13px "DejaVu Sans Condensed", "Noto Sans", sans-serif;
}

h1, h2, h3, ul, dl, dd {
    margin: 0;
    padding: 0;
    font-size: 11px;
    list-style: none;
}

a {
    color: inherit;
    text-decoration: none;
}

button {
    padding: 0;
    border: 0;
    background: none;
    color: inherit;
    font: inherit;
    white-space: nowrap;
}

.sprite {
    position: absolute;
    width: 0;
    height: 0;
}

.icon {
    flex: none;
    width: 16px;
    height: 16px;
}

.icon-lg {
    flex: none;
    width: 32px;
    height: 32px;
}

.chev {
    flex: none;
    width: 8px;
    height: 8px;
}

.caret {
    border: 3px solid transparent;
    border-top-color: #666;
    border-bottom: 0;
}

/* main application */
.app {
    display: flex;
    flex-direction: column;
    height: 100%;
    margin-left: 6px;
    background: #f1f1f1;
}

.main-ribbon {
    display: grid;
    grid-template-columns: 217px 130px 207px 120px 97px 224px;
    flex: none;
    height: 15px;
    overflow: hidden;
    background: #dedede;
    border-bottom: 1px solid #b0b0b0;
    color: #999;
    font-weight: bold;
    line-height: 8px;
    text-align: center;
}

.main-ribbon span {
    height: 14px;
    border-right: 1px solid #b8b8b8;
}

.workspace {
    display: flex;
    flex: 1;
    min-height: 0;
}

.sidebar {
    display: flex;
    flex-direction: column;
    flex: none;
    width: 242px;
}

.sidebar-head {
    display: flex;
    justify-content: space-between;
    align-items: center;
    height: 26px;
    padding: 0 10px;
    color: #999;
    font-weight: bold;
}

.collapse {
    color: #555;
    font-size: 14px;
}

.tree {
    display: flex;
    flex: 1;
    min-height: 0;
    overflow: hidden;
    background: #fff;
    border: 1px solid #b0b0b0;
}

.tree-list {
    flex: 1;
}

.tree-list li {
    display: flex;
    align-items: center;
    gap: 6px;
    height: 20px;
    padding-left: 37px;
}

.tree-list .group {
    padding-left: 5px;
}

/* scrollbars */
.scrollbar {
    display: flex;
    flex-direction: column;
    flex: none;
    width: 17px;
    background: #f1f1f1;
}

.thumb {
    background: #d2d2d2;
}

.scroll-tree .thumb {
    height: 350px;
}

.scroll-grid .thumb {
    height: 198px;
}

.scroll-page .thumb {
    height: 602px;
}

.arrow {
    display: flex;
    align-items: center;
    justify-content: center;
    width: 17px;
    height: 17px;
}

.arrow::before {
    content: "";
    border: 4px solid transparent;
}

.up::before {
    border-bottom: 5px solid #777;
    border-top: 0;
}

.down {
    margin-top: auto;
}

.down::before {
    border-top: 5px solid #777;
    border-bottom: 0;
}

.left::before {
    border-right: 5px solid #bbb;
    border-left: 0;
}

.right::before {
    border-left: 5px solid #777;
    border-right: 0;
}

.folders {
    flex: none;
    height: 112px;
    margin-top: 9px;
    overflow: hidden;
}

.folder {
    display: flex;
    align-items: center;
    gap: 6px;
    height: 46px;
    padding-left: 11px;
    font-weight: bold;
}

.folder.active {
    height: 47px;
    background: #e2e2e2;
    border-top: 1px solid #d8d8d8;
}

.main {
    display: flex;
    flex-direction: column;
    flex: 1;
    min-width: 0;
    margin-left: 11px;
}

.doc-tabs {
    flex: none;
    height: 33px;
    padding-top: 2px;
    border-bottom: 2px solid #b4b4b4;
}

.doc-tab {
    display: flex;
    align-items: center;
    gap: 2px;
    width: 119px;
    height: 31px;
    padding: 0 11px 1px 11px;
    background: #f1f1f1;
    border: 1px solid #b4b4b4;
    border-bottom: 0;
}

.tab-close {
    width: 10px;
    height: 10px;
    margin-left: auto;
    display: flex;
}

.tab-close svg {
    width: 10px;
    height: 10px;
}

.doc {
    flex: 1;
    min-height: 0;
    padding: 2px 0 0 3px;
    border-left: 1px solid #a8a8a8;
}

.dashboard {
    display: grid;
    grid-template-columns: 534px 1384px;
    gap: 3px;
    height: 100%;
    padding: 11px;
    overflow: hidden;
    border: solid #b4b4b4;
    border-width: 1px 0 0 1px;
    align-items: start;
}

.panel {
    height: 245px;
    border: 1px solid #b0b0b0;
}

.panel h2 {
    height: 25px;
    padding-left: 10px;
    background: #dedede;
    line-height: 25px;
}

.facts {
    display: grid;
    row-gap: 4px;
    grid-auto-rows: 18px;
    padding: 11px 11px 0 10px;
    line-height: 19px;
}

.tasks {
    grid-template-columns: 147px 1fr;
}

.licence {
    grid-template-columns: 181px 1fr;
    padding-top: 13px;
}

.licence dd {
    padding-left: 2px;
}

.bar {
    background: #fff;
    color: #000;
    text-align: center;
}

/* configuration window */
.window {
    position: absolute;
    top: 134px;
    right: 81px;
    bottom: 29px;
    left: 275px;
    display: flex;
    flex-direction: column;
    background: #f1f1f1;
    border: 1px solid #b0b0b0;
    box-shadow: 0 14px 32px rgba(0, 0, 0, 0.27);
}

.titlebar {
    flex: none;
    background: #474747;
    color: #fff;
}

.title-row {
    display: flex;
    align-items: center;
    height: 31px;
    padding-left: 8px;
}

.title-row h1 {
    flex: 1;
    margin-left: 5px;
}

.win-btn {
    width: 42px;
    height: 31px;
}

.win-btn svg {
    display: block;
    width: 10px;
    height: 10px;
    margin: 0 auto;
}

.quick-row {
    display: flex;
    align-items: center;
    height: 25px;
    padding-left: 21px;
}

.quick-row .caret {
    border-top-color: #bbb;
}

.menu-row {
    display: flex;
    height: 30px;
    padding: 0 15px 0 4px;
}

.menu-tab {
    padding: 0 16px;
}

.menu-tab.active {
    background: #dedede;
    color: #444;
}

.info {
    margin-left: auto;
}

.ribbon {
    display: flex;
    flex: none;
    height: 103px;
    background: #dedede;
    border-bottom: 2px solid #b0b0b0;
}

.ribbon-group {
    border-right: 1px solid #b8b8b8;
}

.ribbon-group:first-child {
    padding-left: 2px;
}

.ribbon-group h3 {
    height: 19px;
    color: #999;
    line-height: 19px;
    text-align: center;
}

.tools {
    display: flex;
    height: 82px;
}

.tool {
    display: flex;
    flex-direction: column;
    align-items: center;
    width: 50px;
    padding-top: 7px;
}

.tool .icon-lg {
    margin-bottom: 11px;
}

.tool > .caret {
    margin-top: 5px;
}

.tool:disabled {
    color: #9c9c9c;
}

.tool:disabled .caret {
    border-top-color: #aaa;
}

.tool-view {
    width: 78px;
    height: 78px;
    border-right: 1px solid #bbb;
}

.with-caret {
    display: flex;
    align-items: center;
    gap: 5px;
}

.tool-wide {
    width: 62px;
}

.window-body {
    display: flex;
    flex: 1;
    min-height: 0;
    overflow: hidden;
}

.page {
    flex: 1;
    min-width: 0;
    padding: 3px 3px 0;
    border-right: 1px solid #b0b0b0;
}

.tab-row {
    display: flex;
    height: 27px;
    padding-left: 1px;
}

.tabs {
    display: flex;
    flex: 1;
    overflow: hidden;
    align-items: flex-end;
}

.tab {
    flex: none;
    height: 26px;
    padding: 0 8px;
    background: #dedede;
    border: 1px solid #b0b0b0;
    border-bottom: 0;
}

.tab.active {
    height: 27px;
    background: #f1f1f1;
}

.tab-more {
    flex: 1;
    padding: 0;
    border-right: 0;
}

.tab-nav {
    width: 34px;
    display: flex;
    justify-content: center;
    padding-top: 4px;
}

.tab-page {
    padding: 10px 11px;
    border: 1px solid #b0b0b0;
}

.grid {
    display: flex;
    border: 1px solid #b0b0b0;
    background: #f1f1f1;
}

.grid table {
    flex: 1;
    table-layout: fixed;
    border-collapse: collapse;
}

.grid th {
    height: 25px;
    padding: 0;
    border-right: 1px solid #d0d0d0;
    border-bottom: 1px solid #d0d0d0;
    font-weight: normal;
}

.grid .name {
    width: 738px;
    padding-left: 5px;
    text-align: left;
}

.grid td {
    height: 21px;
    padding: 0;
    background: #fff;
    border-right: 1px solid #d0d0d0;
    text-align: center;
}

.grid td + td {
    border-bottom: 1px solid #d0d0d0;
}

.node {
    display: flex;
    align-items: center;
    gap: 1px;
    height: 21px;
    padding-left: 37px;
}

.group .node {
    padding-left: 5px;
}

.node .chev {
    margin-right: 5px;
}

.node span,
.node label {
    flex: 1;
    height: 21px;
    padding-left: 5px;
    border-left: 1px solid #d0d0d0;
    border-bottom: 1px solid #d0d0d0;
    line-height: 20px;
    text-align: left;
}

.locked td + td {
    background: #c0c0c0;
}

.selected label {
    background: #186bd2;
    color: #fff;
}

.selected td + td {
    outline: 1px dotted #222;
    outline-offset: -2px;
}

.grid input {
    display: block;
    width: 16px;
    height: 16px;
    margin: 0 auto;
    appearance: none;
    background: #fff;
    border: 1px solid #b4b4b4;
}

.grid input:checked::before {
    content: "";
    display: block;
    width: 4px;
    height: 8px;
    margin: 2px 0 0 5px;
    border: solid #444;
    border-width: 0 1px 1px 0;
    transform: rotate(38deg);
}

.grid-side {
    display: flex;
    flex-direction: column;
}

.grid-corner {
    height: 25px;
    border-bottom: 1px solid #d0d0d0;
}

.grid-side .scrollbar {
    flex: 1;
}

.status {
    display: flex;
    flex: none;
    align-items: center;
    gap: 5px;
    height: 26px;
    padding: 0 5px 0 6px;
    background: #474747;
    color: #fff;
}

.status span {
    margin-right: 6px;
}

.grip {
    width: 12px;
    height: 12px;
    margin-left: auto;
    align-self: flex-end;
    margin-bottom: 5px;
}

/* marks lie over everything */
.marks {
    position: absolute;
    top: 0;
    left: 0;
    width: 100%;
    height: 100%;
    pointer-events: none;
}
```
